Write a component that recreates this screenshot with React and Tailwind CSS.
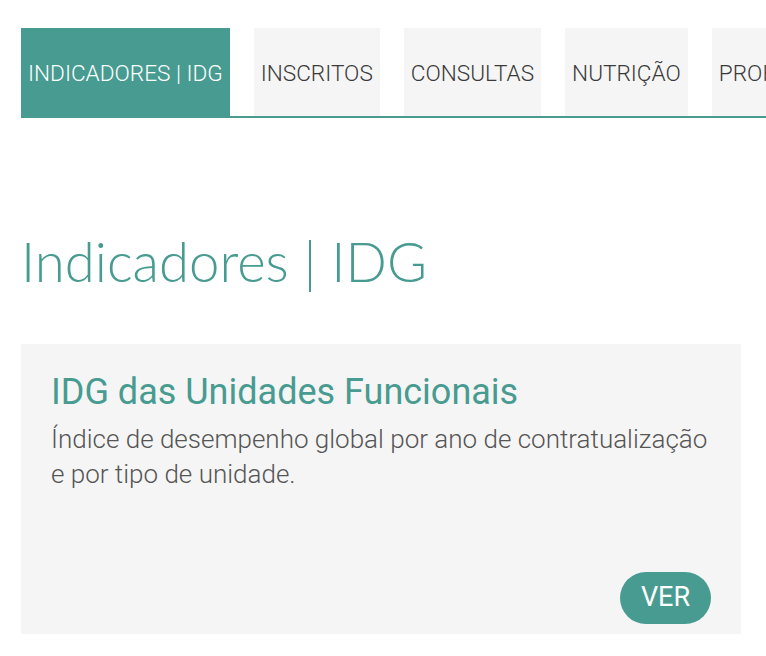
export default function App() {
  const tabs = ["INDICADORES | IDG", "INSCRITOS", "CONSULTAS", "NUTRIÇÃO", "PROFISSIONAIS"];

  return (
    <div className="w-[766px] h-[656px] overflow-hidden bg-white" style={{ fontFamily: "Roboto, sans-serif" }}>
      <div className="pt-[28px] pl-[21px]">
        <div className="flex gap-[24px] border-b-2 border-[#479b90] w-[1000px]">
          {tabs.map((t, i) => (
            <div
              key={t}
              className={`h-[88px] px-[7px] pt-[4px] flex items-center shrink-0 text-[22.6px] font-light whitespace-nowrap ${
                i === 0 ? "bg-[#479b90] text-white" : "bg-[#f5f5f5] text-[#3a3a3a]"
              }`}
            >
              {t}
            </div>
          ))}
        </div>
      </div>

      <h1
        className="ml-[21px] mt-[116px] text-[54.5px] leading-none font-light text-[#479b90]"
        style={{ fontFamily: "Lato, sans-serif" }}
      >
        Indicadores | IDG
      </h1>

      <div className="mx-[21px] mt-[55px] w-[720px] h-[290px] bg-[#f5f5f5] px-[30px] pt-[27px] pb-[10px] flex flex-col">
        <h2 className="text-[36px] leading-[42px] text-[#479b90] whitespace-nowrap">IDG das Unidades Funcionais</h2>
        <p className="mt-[9px] text-[26px] leading-[35px] font-light text-[#555]">
          Índice de desempenho global por ano de contratualização e por tipo de unidade.
        </p>
        <div className="mt-auto flex justify-end">
          <button className="w-[91px] h-[52px] rounded-full bg-[#479b90] text-white text-[27px] flex items-center justify-center">
            VER
          </button>
        </div>
      </div>
    </div>
  );
}
